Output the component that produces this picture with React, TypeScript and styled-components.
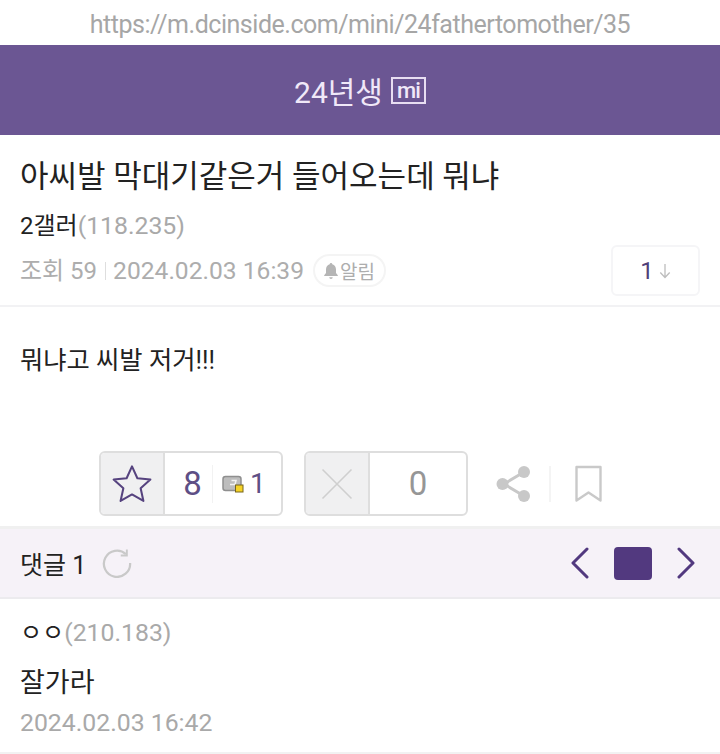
import styled, { createGlobalStyle } from "styled-components";

const GlobalStyle = createGlobalStyle`
  html, body {
    margin: 0;
    padding: 0;
    background: #fff;
    font-family: Roboto, "Noto Sans CJK KR", sans-serif;
  }
  * { box-sizing: border-box; }
`;

const App = () => {
  return (
    <Page>
      <GlobalStyle />
      <UrlBar>https://m.dcinside.com/mini/24fathertomother/35</UrlBar>
      <Header>
        <HeaderTitle>24년생</HeaderTitle>
        <MiniBadge>mi</MiniBadge>
      </Header>

      <PostHead>
        <Title>아씨발 막대기같은거 들어오는데 뭐냐</Title>
        <Writer>
          2갤러<Ip>(118.235)</Ip>
        </Writer>
        <MetaRow>
          <Meta>조회 59</Meta>
          <MetaDivider />
          <MetaDate>2024.02.03 16:39</MetaDate>
          <AlarmChip>
            <svg width="18" height="20" viewBox="0 0 18 19" fill="#b5b5b5">
              <path d="M9 1.500c.8 0 1.300.6 1.300 1.300 2.500.7 3.700 2.700 3.700 5.200v3.500l1.800 2.300v.7H2.200v-.7L4 11.500V8c0-2.500 1.200-4.500 3.700-5.200 0-.7.5-1.300 1.300-1.300z" />
              <path d="M7.300 15.800h3.400c0 1-.8 1.700-1.700 1.700s-1.700-.7-1.700-1.700z" />
            </svg>
            알림
          </AlarmChip>
          <CommentJump>
            <JumpCount>1</JumpCount>
            <svg width="12" height="16" viewBox="0 0 12 16" fill="none" stroke="#bdbdbd" strokeWidth="1.300">
              <path d="M6 1v13.500M1.300 9.500 6 14.500l4.700-5" />
            </svg>
          </CommentJump>
        </MetaRow>
      </PostHead>

      <Body>뭐냐고 씨발 저거!!!</Body>

      <VoteRow>
        <VoteBox>
          <VoteIconCell>
            <svg width="42" height="39" viewBox="0 0 44 42" fill="none" stroke="#56437f" strokeWidth="2.200" strokeLinejoin="round">
              <path d="M22 2.500l5.800 12.800 14 1.500-10.500 9.300 3 13.700L22 32.800 9.700 39.800l3-13.700L2.200 16.800l14-1.500z" />
            </svg>
          </VoteIconCell>
          <UpCount>8</UpCount>
          <InnerDivider />
          <FixCount>
            <svg width="23" height="18" viewBox="0 0 23 18">
              <rect x="1" y="1.500" width="18" height="14" rx="2.500" fill="#bdbdbd" stroke="#8f8f8f" strokeWidth="1.500" />
              <path d="M8 9.500h5l1-4H9.500" fill="none" stroke="#f2f2f2" strokeWidth="1.500" />
              <rect x="13.500" y="10" width="7.500" height="7" fill="#f5d327" stroke="#77651a" strokeWidth="1" />
            </svg>
            <FixNumber>1</FixNumber>
          </FixCount>
        </VoteBox>
        <VoteBox>
          <VoteIconCell>
            <svg width="32" height="32" viewBox="0 0 32 32" fill="none" stroke="#cfcfcf" strokeWidth="1.600">
              <path d="M1.500 1.500l29 29M30.500 1.500l-29 29" />
            </svg>
          </VoteIconCell>
          <DownCount>0</DownCount>
        </VoteBox>
        <ShareIcon>
          <svg width="36" height="38" viewBox="0 0 36 38" fill="#c8c8c8" stroke="none">
            <path d="M8 19 28 7M8 19l20 12" stroke="#c8c8c8" strokeWidth="3" />
            <circle cx="28" cy="7" r="6" />
            <circle cx="6.500" cy="19" r="6" />
            <circle cx="28" cy="31" r="6" />
          </svg>
        </ShareIcon>
        <ToolDivider />
        <svg width="27" height="38" viewBox="0 0 27 38" fill="none" stroke="#c9c9c9" strokeWidth="2.400" strokeLinejoin="round">
          <path d="M1.500 2h24v33.500l-12-8-12 8z" />
        </svg>
      </VoteRow>

      <CommentBar>
        <CommentLabel>댓글 1</CommentLabel>
        <svg width="30" height="30" viewBox="0 0 32 32" fill="none" stroke="#c9c9c9" strokeWidth="2.400">
          <path d="M25.500 6.500A14 14 0 1 0 30 16" />
          <path d="M26.500 1.500v6.500H20" strokeWidth="2" />
        </svg>
        <Pager>
          <svg width="18" height="32" viewBox="0 0 18 32" fill="none" stroke="#52397f" strokeWidth="3" strokeLinecap="round" strokeLinejoin="round">
            <path d="M16 2 2 16l14 14" />
          </svg>
          <StopButton />
          <svg width="18" height="32" viewBox="0 0 18 32" fill="none" stroke="#52397f" strokeWidth="3" strokeLinecap="round" strokeLinejoin="round">
            <path d="M2 2l14 14L2 30" />
          </svg>
        </Pager>
      </CommentBar>

      <Comment>
        <Writer>
          ㅇㅇ<Ip>(210.183)</Ip>
        </Writer>
        <CommentText>잘가라</CommentText>
        <CommentDate>2024.02.03 16:42</CommentDate>
      </Comment>
    </Page>
  );
};

export default App;

const Page = styled.div`
  width: 720px;
  height: 754px;
  overflow: hidden;
  background: #fff;
`;

const UrlBar = styled.div`
  height: 45px;
  line-height: 49px;
  text-align: center;
  font-size: 25px;
  letter-spacing: -0.47px;
  color: #a6a6a6;
  white-space: nowrap;
`;

const Header = styled.header`
  height: 90px;
  background: #6b5693;
  display: flex;
  align-items: center;
  justify-content: center;
  gap: 8px;
  color: #f0e8f8;
`;

const HeaderTitle = styled.h1`
  margin: 0;
  font-size: 30px;
  font-weight: 400;
`;

const MiniBadge = styled.span`
  width: 35px;
  height: 27px;
  border: 2px solid #e8def2;
  font-size: 22px;
  line-height: 23px;
  font-weight: 500;
  letter-spacing: -1px;
  text-align: center;
`;

const PostHead = styled.section`
  height: 172px;
  padding: 21px 20px 0;
  border-bottom: 2px solid #f2f2f4;
`;

const Title = styled.h2`
  margin: 0 0 11px;
  font-size: 31px;
  line-height: 42px;
  font-weight: 400;
  color: #222;
  white-space: nowrap;
`;

const Writer = styled.div`
  font-size: 24px;
  line-height: 34px;
  color: #222;
`;

const Ip = styled.span`
  font-size: 24.8px;
  color: #a9a9a9;
`;

const MetaRow = styled.div`
  display: flex;
  align-items: center;
  margin-top: 2px;
`;

const Meta = styled.span`
  font-size: 24px;
  line-height: 34px;
  color: #adadad;
  white-space: nowrap;
`;

const MetaDate = styled(Meta)`
  font-size: 24.6px;
`;

const MetaDivider = styled.i`
  width: 1px;
  height: 18px;
  margin: 0 7px 0 8px;
  background: #dedede;
`;

const AlarmChip = styled.span`
  display: flex;
  align-items: center;
  height: 33px;
  margin-left: 9px;
  padding: 0 9px 0 7px;
  border: 2px solid #f4f4f4;
  border-radius: 17px;
  font-size: 19px;
  color: #adadad;
`;

const CommentJump = styled.div`
  margin-left: auto;
  width: 89px;
  height: 51px;
  border: 2px solid #f5f5f7;
  border-radius: 6px;
  display: flex;
  align-items: center;
  justify-content: center;
  gap: 5px;
`;

const JumpCount = styled.span`
  font-size: 24px;
  color: #4f3f78;
`;

const Body = styled.div`
  height: 144px;
  padding: 35px 20px 0;
  font-size: 25.3px;
  line-height: 38px;
  color: #222;
`;

const VoteRow = styled.div`
  height: 65px;
  padding-left: 99px;
  display: flex;
  align-items: center;
`;

const VoteBox = styled.div`
  height: 65px;
  display: flex;
  align-items: center;
  margin-right: 21px;
  border: 2px solid #dedede;
  border-radius: 6px;
  overflow: hidden;
`;

const VoteIconCell = styled.div`
  width: 64px;
  height: 100%;
  background: #f0f0f1;
  border-right: 2px solid #dedede;
  display: flex;
  align-items: center;
  justify-content: center;
`;

const UpCount = styled.span`
  width: 47px;
  padding-left: 8px;
  text-align: center;
  font-size: 33px;
  color: #5e4f85;
`;

const InnerDivider = styled.i`
  width: 1px;
  height: 38px;
  background: #f2f2f2;
`;

const FixCount = styled.span`
  width: 68px;
  padding-left: 9px;
  display: flex;
  align-items: center;
  gap: 5px;
`;

const FixNumber = styled.span`
  font-size: 28px;
  color: #5e4f85;
`;

const DownCount = styled.span`
  width: 96px;
  text-align: center;
  font-size: 33px;
  color: #969696;
`;

const ShareIcon = styled.div`
  margin-left: 7px;
  display: flex;
`;

const ToolDivider = styled.i`
  width: 2px;
  height: 36px;
  margin: 0 24px 0 17px;
  background: #f4f4f4;
`;

const CommentBar = styled.div`
  margin-top: 10px;
  height: 73px;
  padding: 0 25px 0 20px;
  display: flex;
  align-items: center;
  gap: 16px;
  background: #f6f2f8;
  border-top: 3px solid #f0f0f0;
  border-bottom: 2px solid #ecebee;
`;

const CommentLabel = styled.span`
  font-size: 25px;
  color: #222;
`;

const Pager = styled.div`
  margin-left: auto;
  display: flex;
  align-items: center;
  gap: 25px;
`;

const StopButton = styled.button`
  width: 38px;
  height: 33px;
  padding: 0;
  border: none;
  border-radius: 4px;
  background: #52397f;
`;

const Comment = styled.section`
  padding: 17px 20px 0;
  height: 155px;
  border-bottom: 2px solid #f2f2f2;
`;

const CommentText = styled.div`
  margin-top: 15px;
  font-size: 27px;
  line-height: 36px;
  color: #222;
`;

const CommentDate = styled.div`
  margin-top: 5px;
  font-size: 24.8px;
  line-height: 34px;
  color: #a9a9a9;
`;
